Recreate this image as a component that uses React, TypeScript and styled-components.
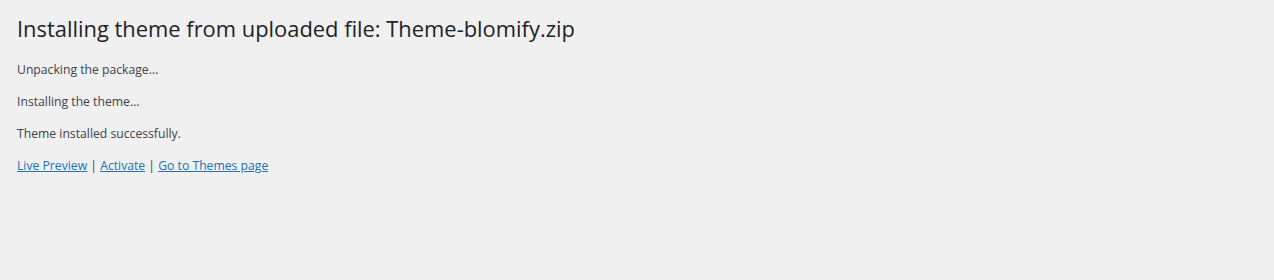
import styled, { createGlobalStyle } from 'styled-components';

const GlobalStyle = createGlobalStyle`
  html, body {
    margin: 0;
    background: #f0f0f1;
  }
  body {
    color: #3c434a;
    font-family: "Open Sans", "Noto Sans", sans-serif;
    font-size: 12.2px;
    line-height: 19px;
    min-height: 280px;
  }
`;

const Wrap = styled.div`
  padding: 5px 20px 0 17px;
`;

const Title = styled.h1`
  margin: 0 0 1px;
  padding: 9px 0 4px;
  font-size: 21.9px;
  font-weight: 400;
  line-height: 29px;
  color: #1d2327;
`;

const Message = styled.p`
  margin: 13px 0;
  font-size: 12.2px;
  line-height: 19px;
`;

const Link = styled.a`
  color: #2271b1;
  text-decoration: underline;
`;

const steps = ['Unpacking the package…', 'Installing the theme…', 'Theme installed successfully.'];

const actions = [
  { label: 'Live Preview', href: '#preview' },
  { label: 'Activate', href: '#activate' },
  { label: 'Go to Themes page', href: '#themes' },
];

function App() {
  return (
    <>
      <GlobalStyle />
      <Wrap>
        <Title>Installing theme from uploaded file: Theme-blomify.zip</Title>
        {steps.map((s) => (
          <Message key={s}>{s}</Message>
        ))}
        <Message>
          {actions.map((a, i) => (
            <span key={a.label}>
              {i > 0 && ' | '}
              <Link href={a.href}>{a.label}</Link>
            </span>
          ))}
        </Message>
      </Wrap>
    </>
  );
}

export default App;
